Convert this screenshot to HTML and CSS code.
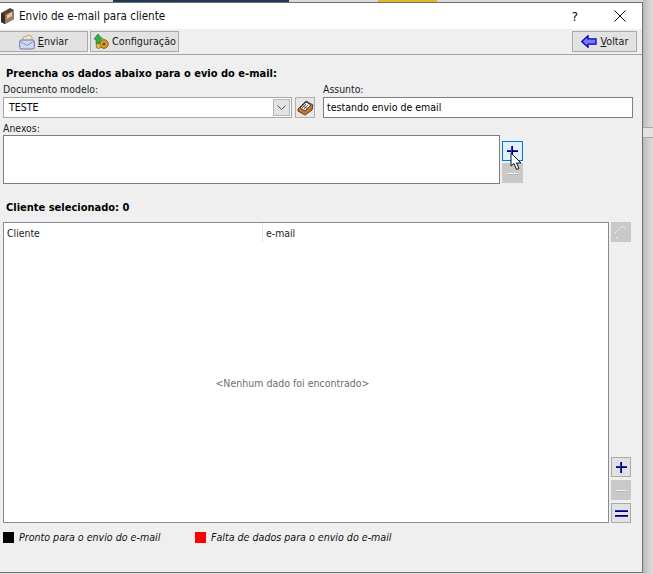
FILE: index.html
```html
<!DOCTYPE html>
<html lang="pt">
<head>
<meta charset="utf-8">
<title>Envio de e-mail para cliente</title>
<link rel="stylesheet" href="styles.css">
</head>
<body>
<div class="backdrop">
  <div class="strip">
    <span class="strip-a"></span>
    <span class="strip-b"></span>
    <span class="strip-c"></span>
  </div>
  <div class="side-panel"><span class="side-band"></span></div>
</div>
<div class="window">
  <header class="titlebar">
    <svg class="title-icon" width="15" height="18" viewBox="0 0 15 18"><path d="M0 6l9-5 4 2v9l-9 5-4-2z" fill="#5d4030"/><path d="M4 8l9-5v9l-9 5z" fill="#9c7b63"/><path d="M6 8l5-3v4l-5 3z" fill="#d9c6ae"/><path d="M0 6l4 2v9l-4-2z" fill="#3f2a1e"/></svg>
    <span class="title-text">Envio de e-mail para cliente</span>
    <span class="title-help">?</span>
    <svg class="title-close" width="12" height="12" viewBox="0 0 12 12"><path d="M.5.5l11 11M11.500.5l-11 11" stroke="#111" fill="none"/></svg>
  </header>
  <div class="toolbar">
    <button class="btn btn-send">
      <svg width="16" height="16" viewBox="0 0 16 16"><path d="M4 8V3.500L10 1l3 2v5z" fill="#f3e4bd" stroke="#a9935f" stroke-width=".7"/><rect x=".7" y="6" width="14.600" height="9" rx="1.500" fill="#cdd9f2" stroke="#6a78a8"/><path d="M1 7l7 4.500L15 7" fill="none" stroke="#8794bd"/></svg>
      <span><u>E</u>nviar</span>
    </button>
    <button class="btn btn-config">
      <svg width="17" height="17" viewBox="0 0 17 17"><path d="M1 6l4-5 4 5-2 .5V11H3V6.500z" fill="#2fb13f" stroke="#176b22" stroke-width=".6"/><path d="M8 3l3 3-2 1z" fill="#5cc96a"/><circle cx="11" cy="11" r="4.300" fill="#d8a12e" stroke="#7c5a12"/><circle cx="11" cy="11" r="1.500" fill="#6c4d10"/><circle cx="5.500" cy="13" r="2.500" fill="#e3b54a" stroke="#7c5a12" stroke-width=".6"/></svg>
      <span>Configuração</span>
    </button>
    <button class="btn btn-back">
      <svg width="16" height="13" viewBox="0 0 16 13"><path d="M.8 6.500L7 .8v3h8v5.400H7v3z" fill="#7a7cf4" stroke="#0000c8" stroke-width="1.300"/></svg>
      <span><u>V</u>oltar</span>
    </button>
  </div>
  <main class="content">
    <h2 class="heading heading-top">Preencha os dados abaixo para o evio do e-mail:</h2>
    <div class="fields">
      <div class="field field-model">
        <label class="label">Documento modelo:</label>
        <div class="model-row">
          <div class="select">
            <span class="select-value">TESTE</span>
            <span class="select-arrow"><svg width="9" height="5" viewBox="0 0 9 5"><path d="M.5.500l4 4 4-4" fill="none" stroke="#555"/></svg></span>
          </div>
          <button class="book-btn">
            <svg width="17" height="17" viewBox="0 0 17 17"><path d="M1 10l8-8 7 4-1 5-7 5-7-4z" fill="#c9762d" stroke="#5f3c1c"/><path d="M3 9l6-6 5 3-6 6z" fill="#e8e8ee" stroke="#444"/><path d="M5 9l4-4M7 10l4-4M6 7l5 3" stroke="#555"/></svg>
          </button>
        </div>
      </div>
      <div class="field field-subject">
        <label class="label">Assunto:</label>
        <div class="input">testando envio de email</div>
      </div>
    </div>
    <label class="label label-attach">Anexos:</label>
    <div class="attach-row">
      <div class="attach-box"></div>
      <div class="attach-tools">
        <button class="sq sq-focus"><span class="plus"></span></button>
        <button class="sq sq-off"><span class="minus"></span></button>
      </div>
    </div>
    <h2 class="heading heading-client">Cliente selecionado: 0</h2>
    <div class="grid-row">
      <div class="table">
        <div class="table-head">
          <span class="col col-client">Cliente</span>
          <span class="col col-mail">e-mail</span>
        </div>
        <div class="table-empty">&lt;Nenhum dado foi encontrado&gt;</div>
      </div>
      <div class="table-tools">
        <button class="sm sm-off sm-top">
          <svg width="16" height="16" viewBox="0 0 16 16"><path d="M2 9l6-6h3l3 2M3 13l2 2" fill="none" stroke="#f4f4f4" stroke-dasharray="2 1"/></svg>
        </button>
        <div class="tools-bottom">
          <button class="sm"><span class="plus"></span></button>
          <button class="sm sm-off"><span class="minus"></span></button>
          <button class="sm"><span class="equal"></span></button>
        </div>
      </div>
    </div>
    <div class="legend">
      <span class="swatch swatch-black"></span>
      <em class="legend-text legend-first">Pronto para o envio do e-mail</em>
      <span class="swatch swatch-red"></span>
      <em class="legend-text">Falta de dados para o envio do e-mail</em>
    </div>
  </main>
</div>
<svg class="cursor" width="13" height="19" viewBox="0 0 13 19"><path d="M1 1v13l3-2.500 2.500 6 2.500-1L6.500 11H11z" fill="#fff" stroke="#111"/></svg>
</body>
</html>
```
FILE: styles.css
```css
* { box-sizing: border-box; }
html, body { margin: 0; height: 100%; }
body {
  width: 653px;
  height: 574px;
  overflow: hidden;
  position: relative;
  background: #e3e3e3;
  font-family: "DejaVu Sans Condensed", "DejaVu Sans", sans-serif;
  font-stretch: condensed;
  font-size: 10.500px;
  color: #000;
}
button { font: inherit; font-stretch: condensed; color: inherit; padding: 0; margin: 0; }

.backdrop { position: absolute; inset: 0; }
.strip { height: 3px; display: flex; background: #d9d9d9; position: relative; }
.strip-a { width: 113px; }
.strip-b { width: 176px; background: #1f3a55; }
.strip-c { width: 59px; margin-left: 89px; background: #e8b32c; }
.side-panel {
  position: absolute;
  top: 0;
  bottom: 0;
  left: 643px;
  right: 0;
  background: linear-gradient(90deg, #b9b9b9, #d2d2d2 60%, #dcdcdc);
}
.side-band { position: absolute; left: 0; right: 0; top: 127px; height: 11px; background: #e2e2e2; border-top: 1px solid #a8a8a8; border-bottom: 1px solid #a8a8a8; }

.window {
  position: absolute;
  left: -1px;
  top: 2px;
  width: 644px;
  height: 571px;
  background: #efefef;
  border: 1px solid #6f6f6f;
  display: flex;
  flex-direction: column;
}
.titlebar {
  height: 26px;
  flex: none;
  background: #fff;
  display: flex;
  align-items: center;
  padding: 0 16px 0 1px;
}
.title-icon { flex: none; }
.title-text { margin-left: 3px; font-size: 11.600px; color: #111; flex: 1; }
.title-help { font-size: 13px; margin-right: 36px; }
.title-close { flex: none; }

.toolbar {
  flex: none;
  height: 26px;
  display: flex;
  align-items: flex-start;
  gap: 2px;
  padding-top: 2px;
  padding-right: 5px;
  border-bottom: 1px solid #a3a3a3;
  background: #efefef;
}
.btn {
  height: 21px;
  background: #e2e2e2;
  border: 1px solid #a8a8a8;
  display: flex;
  align-items: center;
  justify-content: center;
  font-size: 10.700px;
  color: #1a1a1a;
}
.btn-send { width: 88px; border-left: 0; gap: 3px; }
.btn-config { width: 89px; gap: 2px; }
.btn-back { width: 65px; margin-left: auto; gap: 4px; }

.content { flex: 1; display: flex; flex-direction: column; padding: 0 9px 0 3px; min-height: 0; }
.heading { margin: 0; font-size: 11px; font-weight: bold; color: #000; line-height: 14px; padding-left: 3px; }
.heading-top { margin-top: 12px; }
.fields { display: flex; margin-top: 2px; }
.field { display: flex; flex-direction: column; }
.field-model { width: 320px; }
.field-subject { flex: 1; }
.label { font-size: 10.400px; line-height: 13px; color: #222; }
.model-row { display: flex; align-items: flex-start; gap: 3px; margin-top: 1px; }
.select {
  width: 289px;
  height: 21px;
  background: #fff;
  border: 1px solid #a6a6a6;
  display: flex;
  align-items: center;
  justify-content: space-between;
  padding: 1px 1px 1px 5px;
}
.select-value { font-size: 10.500px; line-height: 13px; margin-top: -1px; }
.select-arrow {
  width: 17px;
  height: 17px;
  background: #e3e3e3;
  border: 1px solid #b5b5b5;
  display: flex;
  align-items: center;
  justify-content: center;
}
.book-btn {
  width: 20px;
  height: 21px;
  background: #e6e6e6;
  border: 1px solid #b0b0b0;
  display: flex;
  align-items: center;
  justify-content: center;
}
.input {
  height: 21px;
  margin-top: 1px;
  background: #fff;
  border: 1px solid #7f7f7f;
  display: flex;
  align-items: center;
  padding: 0 0 2px 3px;
  font-size: 10.500px;
}
.label-attach { margin-top: 4px; }
.attach-row { display: flex; gap: 2px; }
.attach-box { width: 497px; height: 49px; background: #fff; border: 1px solid #7d7d87; }
.attach-tools { display: flex; flex-direction: column; gap: 2px; padding-top: 6px; }
.sq {
  width: 21px;
  height: 20px;
  background: #e2e2e2;
  border: 1px solid #aaa;
  display: flex;
  align-items: center;
  justify-content: center;
}
.sq-focus { background: #e0effb; border-color: #0078d7; }
.sq-off { background: #c9c9c9; border-color: #c9c9c9; }
.plus, .minus, .equal { display: block; position: relative; }
.plus { width: 11px; height: 11px; }
.plus::before, .plus::after { content: ""; position: absolute; }
.plus::before { left: 0; right: 0; top: 4px; height: 2px; background: linear-gradient(#2828e8 50%, #000050 50%); }
.plus::after { top: 0; bottom: 0; left: 4px; width: 2px; background: linear-gradient(90deg, #2828e8 50%, #000050 50%); }
.minus { width: 11px; height: 1px; background: #f4f4f4; box-shadow: 0 1px 0 #b5b5b5; }
.equal { width: 13px; height: 7px; background: linear-gradient(#2828e8 1px, #000050 1px, #000050 2px, transparent 2px, transparent 5px, #000050 5px, #000050 6px, #2828e8 6px); }

.heading-client { margin-top: 17px; }
.grid-row { display: flex; gap: 2px; margin-top: 7px; }
.table {
  width: 606px;
  height: 301px;
  background: #fff;
  border: 1px solid #8a8a94;
  display: flex;
  flex-direction: column;
}
.table-head { height: 19px; display: flex; font-size: 10.400px; color: #222; flex: none; }
.col { padding: 3px 0 0 3px; line-height: 14px; }
.col-client { width: 259px; border-right: 1px solid #e4e4e4; }
.table-empty { flex: 1; display: flex; align-items: center; justify-content: center; font-size: 10.500px; color: #6e6e6e; padding: 1px 27px 0 0; }
.table-tools { display: flex; flex-direction: column; justify-content: space-between; }
.tools-bottom { display: flex; flex-direction: column; gap: 3px; }
.sm {
  width: 20px;
  height: 20px;
  background: #e2e2e2;
  border: 1px solid #aaa;
  display: flex;
  align-items: center;
  justify-content: center;
}
.sm-off { background: #c9c9c9; border-color: #c9c9c9; }
.legend { display: flex; align-items: center; margin-top: 7px; height: 14px; }
.swatch { width: 11px; height: 11px; flex: none; }
.swatch-black { background: #000; }
.swatch-red { background: #f00; }
.legend-text { font-size: 10.600px; margin-left: 5px; color: #111; }
.legend-first { width: 176px; flex: none; }

.cursor { position: absolute; left: 510px; top: 152px; }
```
